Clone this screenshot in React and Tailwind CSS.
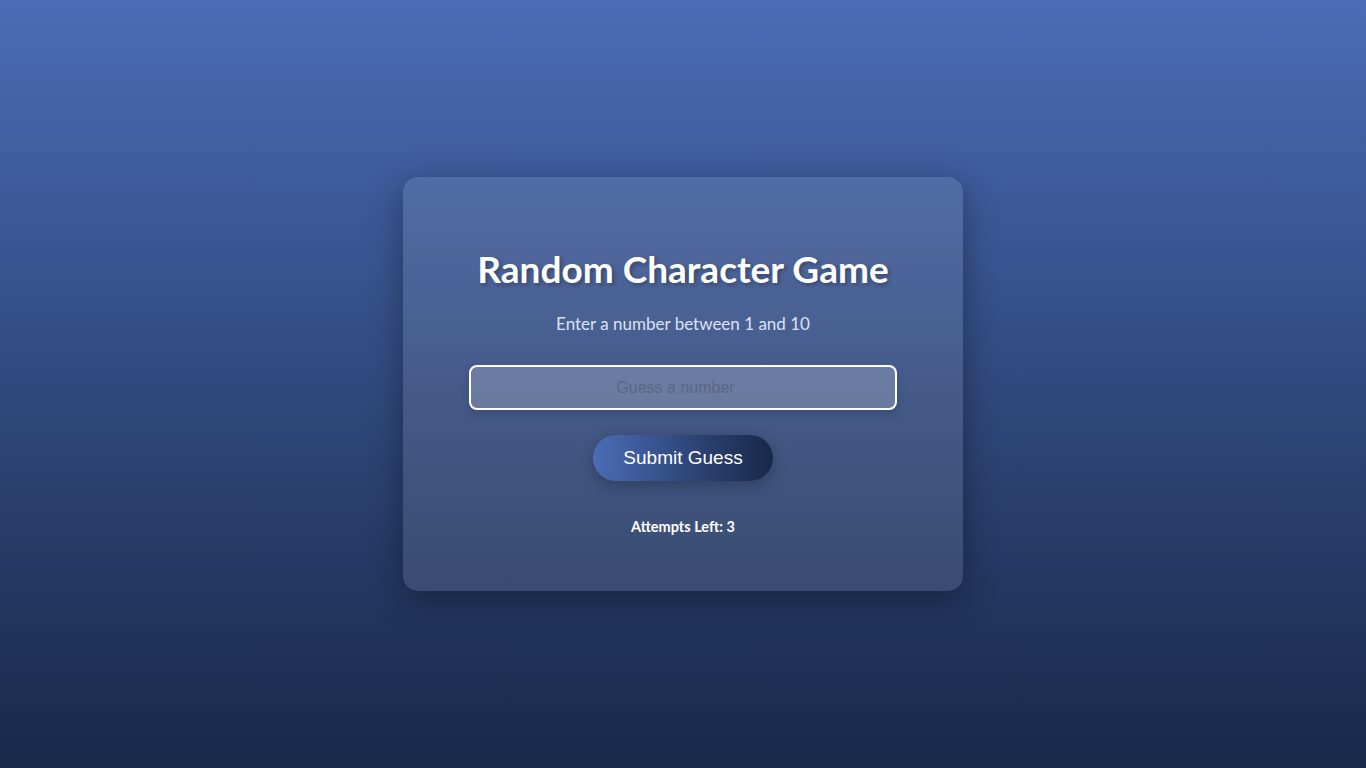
import React, { useState } from 'react'

const App = () => {
  const [guess, setGuess] = useState('')
  const [attempts] = useState(3)

  return (
    <div className="min-h-screen w-full flex items-center justify-center bg-gradient-to-b from-[#4b6cb7] to-[#182848] font-['Lato','Open_Sans',sans-serif]">
      <div className="w-[560px] h-[414px] rounded-[15px] bg-white/10 shadow-[0_8px_32px_rgba(0,0,0,0.35)] px-10 pt-10 flex flex-col items-center">
        <h1 className="mt-[30px] text-[37px] leading-[44px] font-bold text-white [text-shadow:2px_2px_4px_rgba(0,0,0,0.3)]">
          Random Character Game
        </h1>
        <p className="mt-[23px] text-[17px] leading-[20px] text-[#dbe2f4]">
          Enter a number between 1 and 10
        </p>
        <input
          type="number"
          value={guess}
          onChange={(e) => setGuess(e.target.value)}
          placeholder="Guess a number"
          className="mt-[31px] w-[428px] h-[45px] rounded-[8px] border-2 border-white bg-white/20 text-center text-[16px] text-[#333] font-['Liberation_Sans',Arial,sans-serif] placeholder:text-[#5c6686] shadow-[0_4px_10px_rgba(0,0,0,0.15)] outline-none"
        />
        <button className="mt-[25px] w-[180px] h-[46px] rounded-full bg-gradient-to-r from-[#4b6cb7] to-[#182848] text-white text-[19px] font-['Liberation_Sans',Arial,sans-serif] shadow-[0_4px_15px_rgba(0,0,0,0.25)]">
          Submit Guess
        </button>
        <p className="mt-[37px] text-[14.5px] leading-[18px] font-bold text-white">
          Attempts Left: {attempts}
        </p>
      </div>
    </div>
  )
}

export default App
